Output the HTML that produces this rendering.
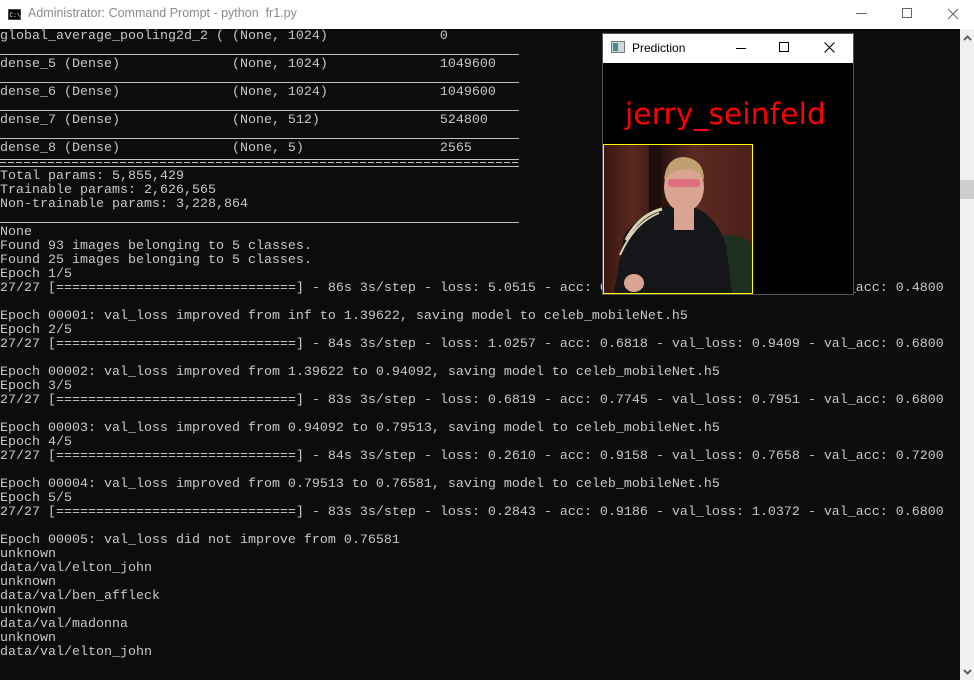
<!DOCTYPE html>
<html><head><meta charset="utf-8"><style>
*{margin:0;padding:0;box-sizing:border-box}
body{width:974px;height:680px;background:#000;position:relative;overflow:hidden;font-family:"Liberation Sans",sans-serif}
#title{position:absolute;left:0;top:0;width:974px;height:29px;background:#fff}
#title .t{position:absolute;left:28px;top:6px;font-size:12.5px;color:#8a8a8a}
#con{position:absolute;left:0;top:29px;width:960px;height:651px;background:#0c0c0c;padding-top:1px}
.r{height:14px;white-space:pre;font-family:"Liberation Mono",monospace;font-size:13.33px;line-height:14px;color:#c8c8c8;position:relative}
.s::after{content:"";position:absolute;left:0;top:10px;width:519px;height:1px;background:#c0c0c0}
.e::after{content:"";position:absolute;left:0;top:3px;width:519px;height:6px;border-top:1px solid #c0c0c0;border-bottom:1px solid #c0c0c0;background:repeating-linear-gradient(90deg,#c0c0c0 0 6px,transparent 6px 8px);background-size:8px 1px;background-repeat:repeat-x;background-position:0 2px}
#sb{position:absolute;left:960px;top:29px;width:14px;height:651px;background:#f0f0f0}
#thumb{position:absolute;left:960px;top:180px;width:14px;height:19px;background:#cdcdcd}
#pw{position:absolute;left:602px;top:33px;width:252px;height:262px;background:#000;border:1px solid #555}
#pt{position:absolute;left:0;top:0;width:250px;height:29px;background:#fff}
#pt .t{position:absolute;left:29px;top:7px;font-size:12px;color:#000}
#name{position:absolute;left:22px;top:63px;font-family:"DejaVu Sans","Liberation Sans",sans-serif;font-size:29.5px;color:#f00;letter-spacing:0.2px}
#img{position:absolute;left:0;top:110px;width:150px;height:150px;border:1px solid #ff0;overflow:hidden;background:linear-gradient(90deg,#3a1812 0,#5a2a20 20%,#2a1410 40%,#5c2a22 60%,#4a2018 100%)}
</style></head><body>
<div id="title">
<svg style="position:absolute;left:8px;top:9px" width="13" height="11"><rect x="0" y="0" width="13" height="11" fill="#000" stroke="#888"/><text x="1.5" y="8" font-size="6" fill="#fff" font-family="Liberation Mono">C:\_</text></svg>
<div class="t">Administrator: Command Prompt - python&nbsp; fr1.py</div>
<div style="position:absolute;left:856px;top:13px;width:11px;height:1px;background:#666"></div>
<div style="position:absolute;left:902px;top:8px;width:10px;height:10px;border:1px solid #666"></div>
<svg style="position:absolute;left:947px;top:8px" width="12" height="12"><path d="M1 1L11 11M11 1L1 11" stroke="#666" stroke-width="1"/></svg>
</div>
<div id="con">
<div class="r">global_average_pooling2d_2 ( (None, 1024)              0</div>
<div class="r s"></div>
<div class="r">dense_5 (Dense)              (None, 1024)              1049600</div>
<div class="r s"></div>
<div class="r">dense_6 (Dense)              (None, 1024)              1049600</div>
<div class="r s"></div>
<div class="r">dense_7 (Dense)              (None, 512)               524800</div>
<div class="r s"></div>
<div class="r">dense_8 (Dense)              (None, 5)                 2565</div>
<div class="r e"></div>
<div class="r">Total params: 5,855,429</div>
<div class="r">Trainable params: 2,626,565</div>
<div class="r">Non-trainable params: 3,228,864</div>
<div class="r s"></div>
<div class="r">None</div>
<div class="r">Found 93 images belonging to 5 classes.</div>
<div class="r">Found 25 images belonging to 5 classes.</div>
<div class="r">Epoch 1/5</div>
<div class="r">27/27 [==============================] - 86s 3s/step - loss: 5.0515 - acc: 0.4839 - val_loss: 1.3962 - val_acc: 0.4800</div>
<div class="r"></div>
<div class="r">Epoch 00001: val_loss improved from inf to 1.39622, saving model to celeb_mobileNet.h5</div>
<div class="r">Epoch 2/5</div>
<div class="r">27/27 [==============================] - 84s 3s/step - loss: 1.0257 - acc: 0.6818 - val_loss: 0.9409 - val_acc: 0.6800</div>
<div class="r"></div>
<div class="r">Epoch 00002: val_loss improved from 1.39622 to 0.94092, saving model to celeb_mobileNet.h5</div>
<div class="r">Epoch 3/5</div>
<div class="r">27/27 [==============================] - 83s 3s/step - loss: 0.6819 - acc: 0.7745 - val_loss: 0.7951 - val_acc: 0.6800</div>
<div class="r"></div>
<div class="r">Epoch 00003: val_loss improved from 0.94092 to 0.79513, saving model to celeb_mobileNet.h5</div>
<div class="r">Epoch 4/5</div>
<div class="r">27/27 [==============================] - 84s 3s/step - loss: 0.2610 - acc: 0.9158 - val_loss: 0.7658 - val_acc: 0.7200</div>
<div class="r"></div>
<div class="r">Epoch 00004: val_loss improved from 0.79513 to 0.76581, saving model to celeb_mobileNet.h5</div>
<div class="r">Epoch 5/5</div>
<div class="r">27/27 [==============================] - 83s 3s/step - loss: 0.2843 - acc: 0.9186 - val_loss: 1.0372 - val_acc: 0.6800</div>
<div class="r"></div>
<div class="r">Epoch 00005: val_loss did not improve from 0.76581</div>
<div class="r">unknown</div>
<div class="r">data/val/elton_john</div>
<div class="r">unknown</div>
<div class="r">data/val/ben_affleck</div>
<div class="r">unknown</div>
<div class="r">data/val/madonna</div>
<div class="r">unknown</div>
<div class="r">data/val/elton_john</div>
</div>
<div id="sb">
<svg style="position:absolute;left:3px;top:6px" width="9" height="6"><path d="M1 5L4.5 1.5L8 5" stroke="#606060" stroke-width="2" fill="none"/></svg>
<svg style="position:absolute;left:3px;top:640px" width="9" height="6"><path d="M1 1L4.5 4.5L8 1" stroke="#606060" stroke-width="2" fill="none"/></svg>
</div>
<div id="thumb"></div>
<div id="pw">
<div id="pt">
<svg style="position:absolute;left:8px;top:7px" width="14" height="12"><rect x="0.5" y="0.5" width="13" height="11" fill="#cfd8dc" stroke="#777"/><rect x="2" y="2" width="5" height="8" fill="#4a8a8a"/></svg>
<div class="t">Prediction</div>
<div style="position:absolute;left:133px;top:14px;width:10px;height:1px;background:#000"></div>
<div style="position:absolute;left:176px;top:8px;width:10px;height:10px;border:1px solid #000"></div>
<svg style="position:absolute;left:221px;top:8px" width="11" height="11"><path d="M0.5 0.5L10.5 10.5M10.5 0.5L0.5 10.5" stroke="#000" stroke-width="1.1"/></svg>
</div>
<div id="name">jerry_seinfeld</div>
<div id="img">
<svg width="148" height="148" viewBox="0 0 148 148">
<rect x="45" y="0" width="12" height="148" fill="#1e0e0a"/>
<ellipse cx="125" cy="130" rx="35" ry="40" fill="#1e3020"/>
<path d="M10 148 L20 90 Q40 65 62 62 L90 62 Q112 70 122 100 L128 148Z" fill="#15161a"/>
<path d="M22 95 Q35 70 58 64" stroke="#d8d0b0" stroke-width="3" fill="none"/>
<path d="M16 110 Q30 78 55 68" stroke="#d8d0b0" stroke-width="2" fill="none"/>
<ellipse cx="80" cy="42" rx="20" ry="25" fill="#d9a590"/>
<path d="M60 35 Q62 12 80 12 Q100 14 100 35 Q92 22 80 25 Q68 24 60 35Z" fill="#c0a070"/>
<rect x="64" y="34" width="32" height="8" rx="3" fill="#e06080" opacity="0.8"/>
<rect x="70" y="60" width="20" height="25" fill="#d9a590"/>
<ellipse cx="30" cy="138" rx="10" ry="9" fill="#d9a590"/>
</svg>
</div>
</div>
</body></html>
